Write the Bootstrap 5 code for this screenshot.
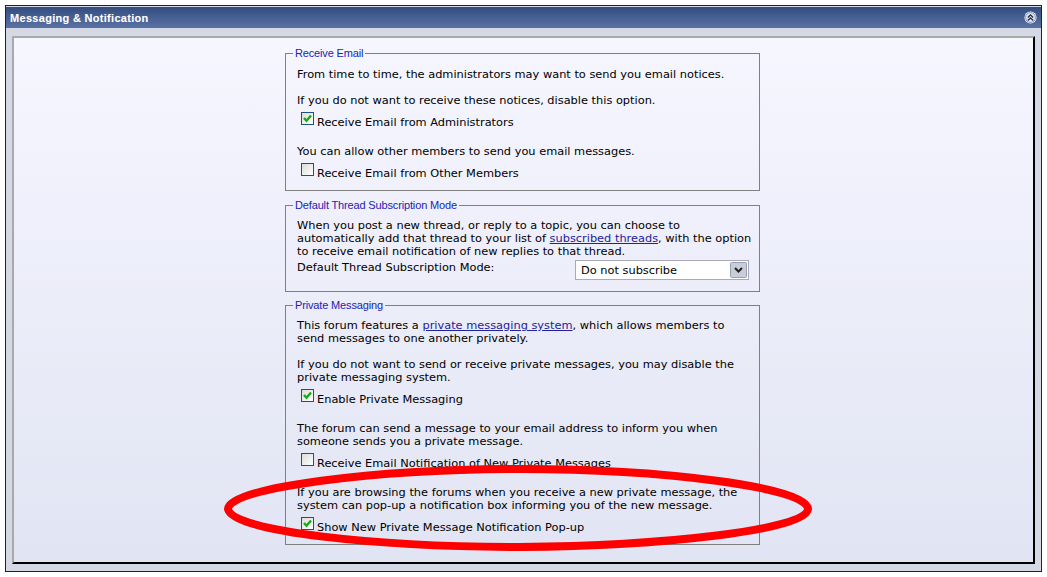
<!DOCTYPE html>
<html lang="en">
<head>
<meta charset="utf-8">
<title>Messaging &amp; Notification</title>
<link href="https://cdn.jsdelivr.net/npm/bootstrap@5.3.0/dist/css/bootstrap.min.css" rel="stylesheet">
<style>
html,body{background:#fff;height:577px;overflow:hidden}
body{position:relative;padding:5px 5px 0;font:11.37px/13px "DejaVu Sans",Verdana,sans-serif;color:#000}
.shell{width:1037px;height:567px;border:1px solid #0b198c;background:#d5d8e5}
.shell-head{height:21px;margin:1px 0 0;padding:0 4px;background:linear-gradient(#344d80,#5a72a3);color:#fff;font:bold 11px "Liberation Sans",Arial,sans-serif;letter-spacing:.3px;text-shadow:0 0 1px #fff3}
.shell-body{padding:8px 6px 6px}
.panel-area{height:528px;border:2px solid;border-color:#a9a9a9 #000 #000 #a9a9a9;background:linear-gradient(#f6f6ff,#e1e4f3);padding-top:9px}
.group-set{width:475px;margin:0 0 8px 271px;border:1px solid #808080;padding:7px 11px 0}
.group-set.first-set{padding-top:8px}
.group-set.mid-set{margin-bottom:7px}
.group-set.mid-set p{margin-right:-6px}
.group-set legend{float:none;width:auto;margin:0 0 0 -4px;padding:0 2px;font:11px/13px "Liberation Sans",Arial,sans-serif;color:#2222b4;letter-spacing:-.15px}
.group-set p{margin-top:0;margin-bottom:13px}
.opt{height:22px;display:flex;align-items:flex-start;margin:0 0 16px 4px;padding-top:9px}
.opt:last-child{margin-bottom:0}
.opt span{line-height:13px}
.opt .form-check-input{appearance:none;flex:none;width:13px;height:13px;margin:-4px 3px 0 0;border:1px solid #1c5180;border-radius:0;background:linear-gradient(135deg,#dcdcd7,#fff);box-shadow:none}
.opt .form-check-input:checked{background-color:transparent;border-color:#1c5180;background-image:url("data:image/svg+xml,%3Csvg xmlns='http://www.w3.org/2000/svg' viewBox='0 0 11 11'%3E%3Cpath d='M2 5l2.500 2.700L9 2.500' fill='none' stroke='%2318a818' stroke-width='2.400'/%3E%3C/svg%3E"),linear-gradient(135deg,#dcdcd7,#fff);background-size:auto}
.sel-row{height:22px;margin-right:-1px}
.sel-row label{margin-top:3px}
.sel-box{width:174px;height:20px;margin-top:2px;padding:0 5px;border:1px solid #a9a9b8;border-radius:0;font:11.37px "DejaVu Sans",Verdana,sans-serif;color:#000;background:#fff url("data:image/svg+xml,%3Csvg xmlns='http://www.w3.org/2000/svg' width='17' height='16'%3E%3Crect x='.5' y='.5' width='16' height='15' rx='1' fill='%23c9cdd8' stroke='%2397a0b5'/%3E%3Cpath d='M5 6l3.500 3.500L12 6' fill='none' stroke='%23222' stroke-width='2'/%3E%3C/svg%3E") no-repeat right 1px center}
.group-set a{color:#22229c}
.ring{position:absolute;left:0;top:0;pointer-events:none}
.fold{width:13px;height:13px}
</style>
</head>
<body>
<div class="shell">
  <div class="shell-head d-flex align-items-center justify-content-between">
    <span>Messaging &amp; Notification</span>
    <svg class="fold" viewBox="0 0 13 13"><circle cx="6.500" cy="6.500" r="6" fill="#fff"/><circle cx="6.500" cy="6.500" r="5" fill="#dfe3ee" stroke="#8a97b5"/><path d="M3.800 6.500l2.700-2.500 2.700 2.500M3.800 9.500l2.700-2.500 2.700 2.500" fill="none" stroke="#22335a" stroke-width="1.300"/></svg>
  </div>
  <div class="shell-body">
    <div class="panel-area">
      <fieldset class="group-set first-set" style="height:144px">
        <legend>Receive Email</legend>
        <p>From time to time, the administrators may want to send you email notices.</p>
        <p class="mb-0">If you do not want to receive these notices, disable this option.</p>
        <label class="opt"><input class="form-check-input" type="checkbox" checked><span>Receive Email from Administrators</span></label>
        <p class="mb-0">You can allow other members to send you email messages.</p>
        <label class="opt"><input class="form-check-input" type="checkbox"><span>Receive Email from Other Members</span></label>
      </fieldset>
      <fieldset class="group-set mid-set" style="height:93px">
        <legend>Default Thread Subscription Mode</legend>
        <p class="mb-0">When you post a new thread, or reply to a topic, you can choose to automatically add that thread to your list of <a href="#">subscribed threads</a>, with the option to receive email notification of new replies to that thread.</p>
        <div class="sel-row d-flex justify-content-between align-items-start">
          <label for="mode">Default Thread Subscription Mode:</label>
          <select id="mode" class="form-select sel-box"><option>Do not subscribe</option></select>
        </div>
      </fieldset>
      <fieldset class="group-set" style="height:246px">
        <legend>Private Messaging</legend>
        <p>This forum features a <a href="#">private messaging system</a>, which allows members to send messages to one another privately.</p>
        <p class="mb-0">If you do not want to send or receive private messages, you may disable the private messaging system.</p>
        <label class="opt"><input class="form-check-input" type="checkbox" checked><span>Enable Private Messaging</span></label>
        <p class="mb-0">The forum can send a message to your email address to inform you when someone sends you a private message.</p>
        <label class="opt"><input class="form-check-input" type="checkbox"><span>Receive Email Notification of New Private Messages</span></label>
        <p class="mb-0">If you are browsing the forums when you receive a new private message, the system can pop-up a notification box informing you of the new message.</p>
        <label class="opt"><input class="form-check-input" type="checkbox" checked><span>Show New Private Message Notification Pop-up</span></label>
      </fieldset>
    </div>
  </div>
</div>
<svg class="ring" width="1047" height="577" viewBox="0 0 1047 577"><path d="M228 509C228 487 380 469 520 469C660 469 808 487 808 509C808 530 660 546 520 547C380 547 232 532 228 509Z" fill="none" stroke="#fe0000" stroke-width="8"/></svg>
</body>
</html>
